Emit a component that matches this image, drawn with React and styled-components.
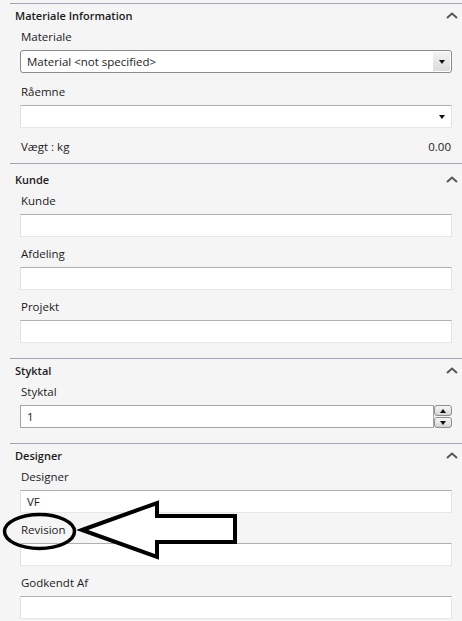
// App.jsx
import React from "react";
import styled, { createGlobalStyle } from "styled-components";

const GlobalStyle = createGlobalStyle`
  html, body {
    margin: 0;
    padding: 0;
    background: #f5f5f5;
  }
  body {
    font-family: "Open Sans", "Noto Sans", "Liberation Sans", sans-serif;
    font-size: 11px;
    color: #1b1b1b;
  }
`;

const Page = styled.div`
  position: relative;
  width: 462px;
  height: 621px;
  overflow: hidden;
  padding-top: 3px;
  box-sizing: border-box;
`;

const Section = styled.section`
  margin-left: 10px;
  border-top: 1px solid #a4a5b6;
  padding: 0 10px ${(p) => p.$bottom}px 5px;
`;

const Header = styled.div`
  display: flex;
  justify-content: space-between;
  align-items: center;
  height: 20px;
  margin: ${(p) => p.$top}px -6px 3px 0;
  font-weight: 600;
  font-size: 11px;
`;

const Fields = styled.div`
  display: flex;
  flex-direction: column;
  gap: ${(p) => p.$gap}px;
  padding-left: 5px;
`;

const Field = styled.div`
  display: flex;
  flex-direction: column;
`;

const Label = styled.div`
  line-height: 18px;
  height: 18px;
  margin-bottom: 4px;
  padding-left: 1px;
  font-size: 11.5px;
`;

const Box = styled.div`
  display: flex;
  align-items: center;
  height: 23px;
  flex: none;
  box-sizing: border-box;
  background: #fff;
  border: 1px solid;
  border-color: #aeafb5 #e2e3e8 #e6e7ea #dfe0e5;
  padding-left: 6px;
  font-size: 11.5px;
`;

const Select = styled(Box)`
  justify-content: space-between;
  padding-right: 0;
  ${(p) =>
    p.$strong &&
    `
    border-color: #8b8b8b;
    border-radius: 3px;
  `}
`;

const DropButton = styled.div`
  width: 17px;
  align-self: stretch;
  display: flex;
  align-items: center;
  justify-content: center;
  margin: 1px 1px 1px 0;
  background: ${(p) =>
    p.$plain ? "transparent" : "linear-gradient(#f3f3f3, #dcdcdc)"};
  border-radius: 0 2px 2px 0;
`;

const Caret = styled.span`
  width: 0;
  height: 0;
  border-left: 3.5px solid transparent;
  border-right: 3.5px solid transparent;
  border-${(p) => (p.$up ? "bottom" : "top")}: 4px solid #111;
`;

const ValueRow = styled.div`
  display: flex;
  justify-content: space-between;
  line-height: 18px;
  padding: 0 1px;
  font-size: 11.5px;
`;

const SpinRow = styled.div`
  display: flex;
  height: 23px;
`;

const NumberBox = styled(Box)`
  flex: 1;
  border-color: #a3a3a3;
`;

const Spinner = styled.div`
  width: 18px;
  display: flex;
  flex-direction: column;
  gap: 1px;
`;

const SpinButton = styled.div`
  flex: 1;
  display: flex;
  align-items: center;
  justify-content: center;
  border: 1px solid #8e8e8e;
  border-radius: 3px;
  background: linear-gradient(#f7f7f7, #d4d4d4);
`;

const Overlay = styled.svg`
  position: absolute;
  left: 0;
  top: 0;
  pointer-events: none;
`;

function Chevron() {
  return (
    <svg width="12" height="7" viewBox="0 0 12 7">
      <path d="M1 6 L6 1.5 L11 6" fill="none" stroke="#555" strokeWidth="2" />
    </svg>
  );
}

function TextField({ label, value }) {
  return (
    <Field>
      <Label>{label}</Label>
      <Box>{value}</Box>
    </Field>
  );
}

export default function App() {
  return (
    <>
      <GlobalStyle />
      <Page>
        <Section $bottom={7}>
          <Header $top={1}>
            Materiale Information <Chevron />
          </Header>
          <Fields $gap={10}>
            <Field>
              <Label>Materiale</Label>
              <Select $strong>
                Material &lt;not specified&gt;
                <DropButton>
                  <Caret />
                </DropButton>
              </Select>
            </Field>
            <Field>
              <Label>Råemne</Label>
              <Select>
                <span />
                <DropButton $plain>
                  <Caret />
                </DropButton>
              </Select>
            </Field>
            <ValueRow>
              <span>Vægt : kg</span>
              <span>0.00</span>
            </ValueRow>
          </Fields>
        </Section>

        <Section $bottom={15}>
          <Header $top={5}>
            Kunde <Chevron />
          </Header>
          <Fields $gap={8}>
            <TextField label="Kunde" />
            <TextField label="Afdeling" />
            <TextField label="Projekt" />
          </Fields>
        </Section>

        <Section $bottom={15}>
          <Header $top={1}>
            Styktal <Chevron />
          </Header>
          <Fields $gap={8}>
            <Field>
              <Label>Styktal</Label>
              <SpinRow>
                <NumberBox>1</NumberBox>
                <Spinner>
                  <SpinButton>
                    <Caret $up />
                  </SpinButton>
                  <SpinButton>
                    <Caret />
                  </SpinButton>
                </Spinner>
              </SpinRow>
            </Field>
          </Fields>
        </Section>

        <Section $bottom={15}>
          <Header $top={1}>
            Designer <Chevron />
          </Header>
          <Fields $gap={8}>
            <TextField label="Designer" value="VF" />
            <TextField label="Revision" />
            <TextField label="Godkendt Af" />
          </Fields>
        </Section>

        <Overlay width="462" height="621">
          <ellipse cx="39.5" cy="531.5" rx="35" ry="17" fill="none" stroke="#000" strokeWidth="3.5" />
          <polygon
            points="82,530 157,503 157,516 235,516 235,542 157,542 157,557"
            fill="#fff"
            stroke="#000"
            strokeWidth="4"
            strokeLinejoin="miter"
          />
        </Overlay>
      </Page>
    </>
  );
}
